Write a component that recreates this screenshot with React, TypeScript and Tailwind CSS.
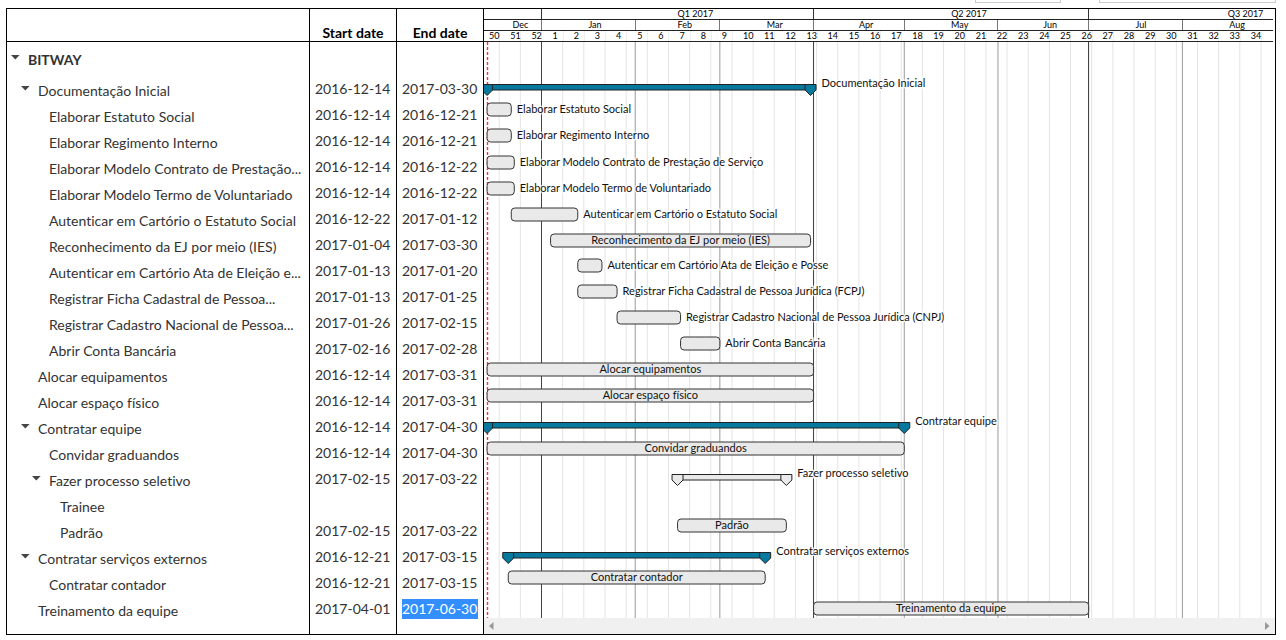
type Task = {
  name: string;
  label?: string;
  depth: number;
  kind?: "summary" | "outline";
  start?: string;
  end?: string;
  y?: number;
  inside?: boolean;
  selected?: boolean;
};
type Span = { label: string; from: number; to: number };

const DAY = 86400000;
const PX = 3.023;
const ORIGIN = Date.UTC(2017, 0, 1);
const day = (s: string) => (Date.parse(s + "T00:00:00Z") - ORIGIN) / DAY;
const xAt = (d: number) => 57.5 + d * PX;

const tasks: Task[] = [
  { name: "Documentação Inicial", depth: 1, kind: "summary", start: "2016-12-14", end: "2017-03-30", y: 89 },
  { name: "Elaborar Estatuto Social", depth: 2, start: "2016-12-14", end: "2016-12-21", y: 109 },
  { name: "Elaborar Regimento Interno", depth: 2, start: "2016-12-14", end: "2016-12-21", y: 135 },
  { name: "Elaborar Modelo Contrato de Prestação...", label: "Elaborar Modelo Contrato de Prestação de Serviço", depth: 2, start: "2016-12-14", end: "2016-12-22", y: 162 },
  { name: "Elaborar Modelo Termo de Voluntariado", depth: 2, start: "2016-12-14", end: "2016-12-22", y: 188 },
  { name: "Autenticar em Cartório o Estatuto Social", depth: 2, start: "2016-12-22", end: "2017-01-12", y: 214 },
  { name: "Reconhecimento da EJ por meio (IES)", depth: 2, start: "2017-01-04", end: "2017-03-30", y: 240, inside: true },
  { name: "Autenticar em Cartório Ata de Eleição e...", label: "Autenticar em Cartório Ata de Eleição e Posse", depth: 2, start: "2017-01-13", end: "2017-01-20", y: 265 },
  { name: "Registrar Ficha Cadastral de Pessoa...", label: "Registrar Ficha Cadastral de Pessoa Jurídica (FCPJ)", depth: 2, start: "2017-01-13", end: "2017-01-25", y: 291 },
  { name: "Registrar Cadastro Nacional de Pessoa...", label: "Registrar Cadastro Nacional de Pessoa Jurídica (CNPJ)", depth: 2, start: "2017-01-26", end: "2017-02-15", y: 317 },
  { name: "Abrir Conta Bancária", depth: 2, start: "2017-02-16", end: "2017-02-28", y: 343 },
  { name: "Alocar equipamentos", depth: 1, start: "2016-12-14", end: "2017-03-31", y: 369, inside: true },
  { name: "Alocar espaço físico", depth: 1, start: "2016-12-14", end: "2017-03-31", y: 395, inside: true },
  { name: "Contratar equipe", depth: 1, kind: "summary", start: "2016-12-14", end: "2017-04-30", y: 427 },
  { name: "Convidar graduandos", depth: 2, start: "2016-12-14", end: "2017-04-30", y: 448, inside: true },
  { name: "Fazer processo seletivo", depth: 2, kind: "outline", start: "2017-02-15", end: "2017-03-22", y: 479 },
  { name: "Trainee", depth: 3 },
  { name: "Padrão", depth: 3, start: "2017-02-15", end: "2017-03-22", y: 525, inside: true },
  { name: "Contratar serviços externos", depth: 1, kind: "summary", start: "2016-12-21", end: "2017-03-15", y: 557 },
  { name: "Contratar contador", depth: 2, start: "2016-12-21", end: "2017-03-15", y: 577, inside: true },
  { name: "Treinamento da equipe", depth: 1, start: "2017-04-01", end: "2017-06-30", y: 608, inside: true, selected: true },
];

const FIRST = -19.2;
const quarters: Span[] = [
  { label: "", from: FIRST, to: 0 },
  { label: "Q1 2017", from: 0, to: 90 },
  { label: "Q2 2017", from: 90, to: 181 },
  { label: "Q3 2017", from: 181, to: 273 },
];
const starts = [FIRST, 0, 31, 59, 90, 120, 151, 181, 212, 243];
const months: Span[] = ["Dec", "Jan", "Feb", "Mar", "Apr", "May", "Jun", "Jul", "Aug"].map((label, i) => ({
  label,
  from: starts[i],
  to: starts[i + 1],
}));
const weeks: Span[] = Array.from({ length: 37 }, (_, i) => ({
  label: String(i < 3 ? 50 + i : i - 2),
  from: (i - 3) * 7,
  to: (i - 2) * 7,
}));

const indent: Record<number, string> = { 1: "pl-[14px]", 2: "pl-[25px]", 3: "pl-[36px]" };

function Toggle({ name }: { name: string }) {
  return (
    <button
      type="button"
      aria-label={`Collapse ${name}`}
      aria-expanded="true"
      className="flex h-[10px] w-[17px] shrink-0 items-start"
    >
      <svg className="block" width="9" height="5" viewBox="0 0 9 5" aria-hidden="true">
        <path d="M0 0h8.6L4.3 4.6z" fill="#444" />
      </svg>
    </button>
  );
}

function Scale({ cells, ticks }: { cells: Span[]; ticks: string }) {
  return (
    <div className="flex h-[11px] border-b border-[#222]">
      {cells.map((c) => (
        <div
          key={c.from}
          className={`shrink-0 whitespace-nowrap ${ticks}`}
          style={{ width: (c.to - c.from) * PX }}
        >
          <span className="ml-[50%] block leading-[10px]">{c.label}</span>
        </div>
      ))}
    </div>
  );
}

const haloClass = "fill-[#111] stroke-white/70 stroke-3 [paint-order:stroke]";

function GanttBar({ task }: { task: Task }) {
  if (!task.start || !task.end || !task.y) return null;
  const y = task.y - 42;
  const x1 = xAt(day(task.start));
  const x2 = xAt(day(task.end) + 1);
  const label = task.label ?? task.name;
  if (task.kind) {
    const fill = task.kind === "summary" ? "#07799f" : "#e9e9e9";
    const cap = (x: number) => `M${x - 5.5} ${y - 4.5}h11v5.5l-5.5 5.5l-5.5-5.5z`;
    return (
      <g>
        <rect x={x1} y={y - 4.5} width={x2 - x1} height="5.5" fill={fill} stroke="#222" />
        <path d={cap(x1)} fill={fill} stroke="#222" />
        <path d={cap(x2)} fill={fill} stroke="#222" />
        <text x={x2 + 11} y={y - 2} className={haloClass}>{label}</text>
      </g>
    );
  }
  return (
    <g>
      <rect x={x1} y={y - 6} width={x2 - x1} height="13" rx="3.5" fill="#e9e9e9" stroke="#333" />
      {task.inside ? (
        <text x={(x1 + x2) / 2} y={y + 4} textAnchor="middle" className="fill-[#111]">{label}</text>
      ) : (
        <text x={x2 + 5.5} y={y + 4} className={haloClass}>{label}</text>
      )}
    </g>
  );
}

export default function App() {
  return (
    <main className="bg-white pr-[10px] pb-[5px] pl-[6px] font-['Lato',sans-serif] text-[#333] [font-variant-ligatures:none]">
      <div className="flex h-[8px] items-start justify-end gap-[38px]">
        <div className="h-[3px] w-[86px] border-x border-b border-[#ccc]" />
        <div className="h-[3px] w-[177px] border-x border-b border-[#ccc]" />
      </div>
      <div className="flex border border-black">
        <table className="w-[477px] shrink-0 table-fixed border-separate border-spacing-0 text-[14px] leading-[20px]">
          <colgroup>
            <col className="w-[303px]" />
            <col className="w-[87px]" />
            <col className="w-[87px]" />
          </colgroup>
          <thead>
            <tr className="h-[33px] text-black">
              <th aria-label="Task" className="border-r border-b border-black p-0" />
              <th className="border-r border-b border-black p-0 align-bottom leading-[16px]">Start date</th>
              <th className="border-r border-b border-black p-0 align-bottom leading-[16px]">End date</th>
            </tr>
          </thead>
          <tbody>
            <tr className="h-[36px]">
              <td className="border-r border-black p-0 pl-[4px]">
                <div className="flex items-center">
                  <Toggle name="BITWAY" />
                  <b>BITWAY</b>
                </div>
              </td>
              <td className="border-r border-black p-0" />
              <td className="border-r border-black p-0" />
            </tr>
            {tasks.map((t) => (
              <tr key={t.name} className="h-[26px]">
                <td className={`border-r border-black py-0 pr-0 ${indent[t.depth]}`}>
                  <div className="flex items-center whitespace-nowrap">
                    {t.kind ? <Toggle name={t.name} /> : <span className="w-[17px] shrink-0" />}
                    <span>{t.name}</span>
                  </div>
                </td>
                <td className="border-r border-black px-[5px] pt-0 pb-1 whitespace-nowrap">{t.start}</td>
                <td className="border-r border-black px-[5px] pt-0 pb-1 whitespace-nowrap">
                  {t.selected ? (
                    <span className="block bg-[#338fff] text-white">{t.end}</span>
                  ) : (
                    t.end
                  )}
                </td>
              </tr>
            ))}
            <tr className="h-[10px]" aria-hidden="true">
              <td className="border-r border-black p-0" />
              <td className="border-r border-black p-0" />
              <td className="border-r border-black p-0" />
            </tr>
          </tbody>
        </table>
        <div className="flex min-w-0 flex-1 flex-col">
          <div className="mr-[2px] overflow-hidden text-[9px] text-black">
            <Scale cells={quarters} ticks="border-r border-[#333]" />
            <Scale cells={months} ticks="border-r border-[#777]" />
            <div className="-ml-[5px]">
              <Scale cells={weeks} ticks="border-r border-[#eee]" />
            </div>
          </div>
          <div className="min-w-0 overflow-hidden">
            <svg className="block text-[11px]" width="789" height="576" role="img" aria-label="Gantt chart">
              {weeks.concat({ label: "35", from: 238, to: 245 }).map((w) => (
                <path key={w.from} d={`M${xAt(w.to)} 0V576`} stroke="#e4e4e4" />
              ))}
              {starts.slice(2).map((s) => (
                <path key={s} d={`M${xAt(s)} 0V576`} stroke="#999" />
              ))}
              {[0, 90, 181].map((s) => (
                <path key={s} d={`M${Math.floor(xAt(s)) + 0.5} 0V576`} stroke="#444" />
              ))}
              <path d="M3.5 0V576" stroke="#ff2a3a" strokeWidth="1.4" strokeDasharray="3 2" />
              {tasks.map((t) => (
                <GanttBar key={t.name} task={t} />
              ))}
            </svg>
          </div>
          <div className="flex flex-1 items-center justify-between bg-[#f0f0f0] px-[5px]">
            <button type="button" aria-label="Scroll left">
              <svg width="5" height="8" viewBox="0 0 5 8"><path d="M4.5 0v8L0 4z" fill="#999" /></svg>
            </button>
            <button type="button" aria-label="Scroll right">
              <svg width="5" height="8" viewBox="0 0 5 8"><path d="M0 0v8L4.5 4z" fill="#999" /></svg>
            </button>
          </div>
        </div>
      </div>
    </main>
  );
}
